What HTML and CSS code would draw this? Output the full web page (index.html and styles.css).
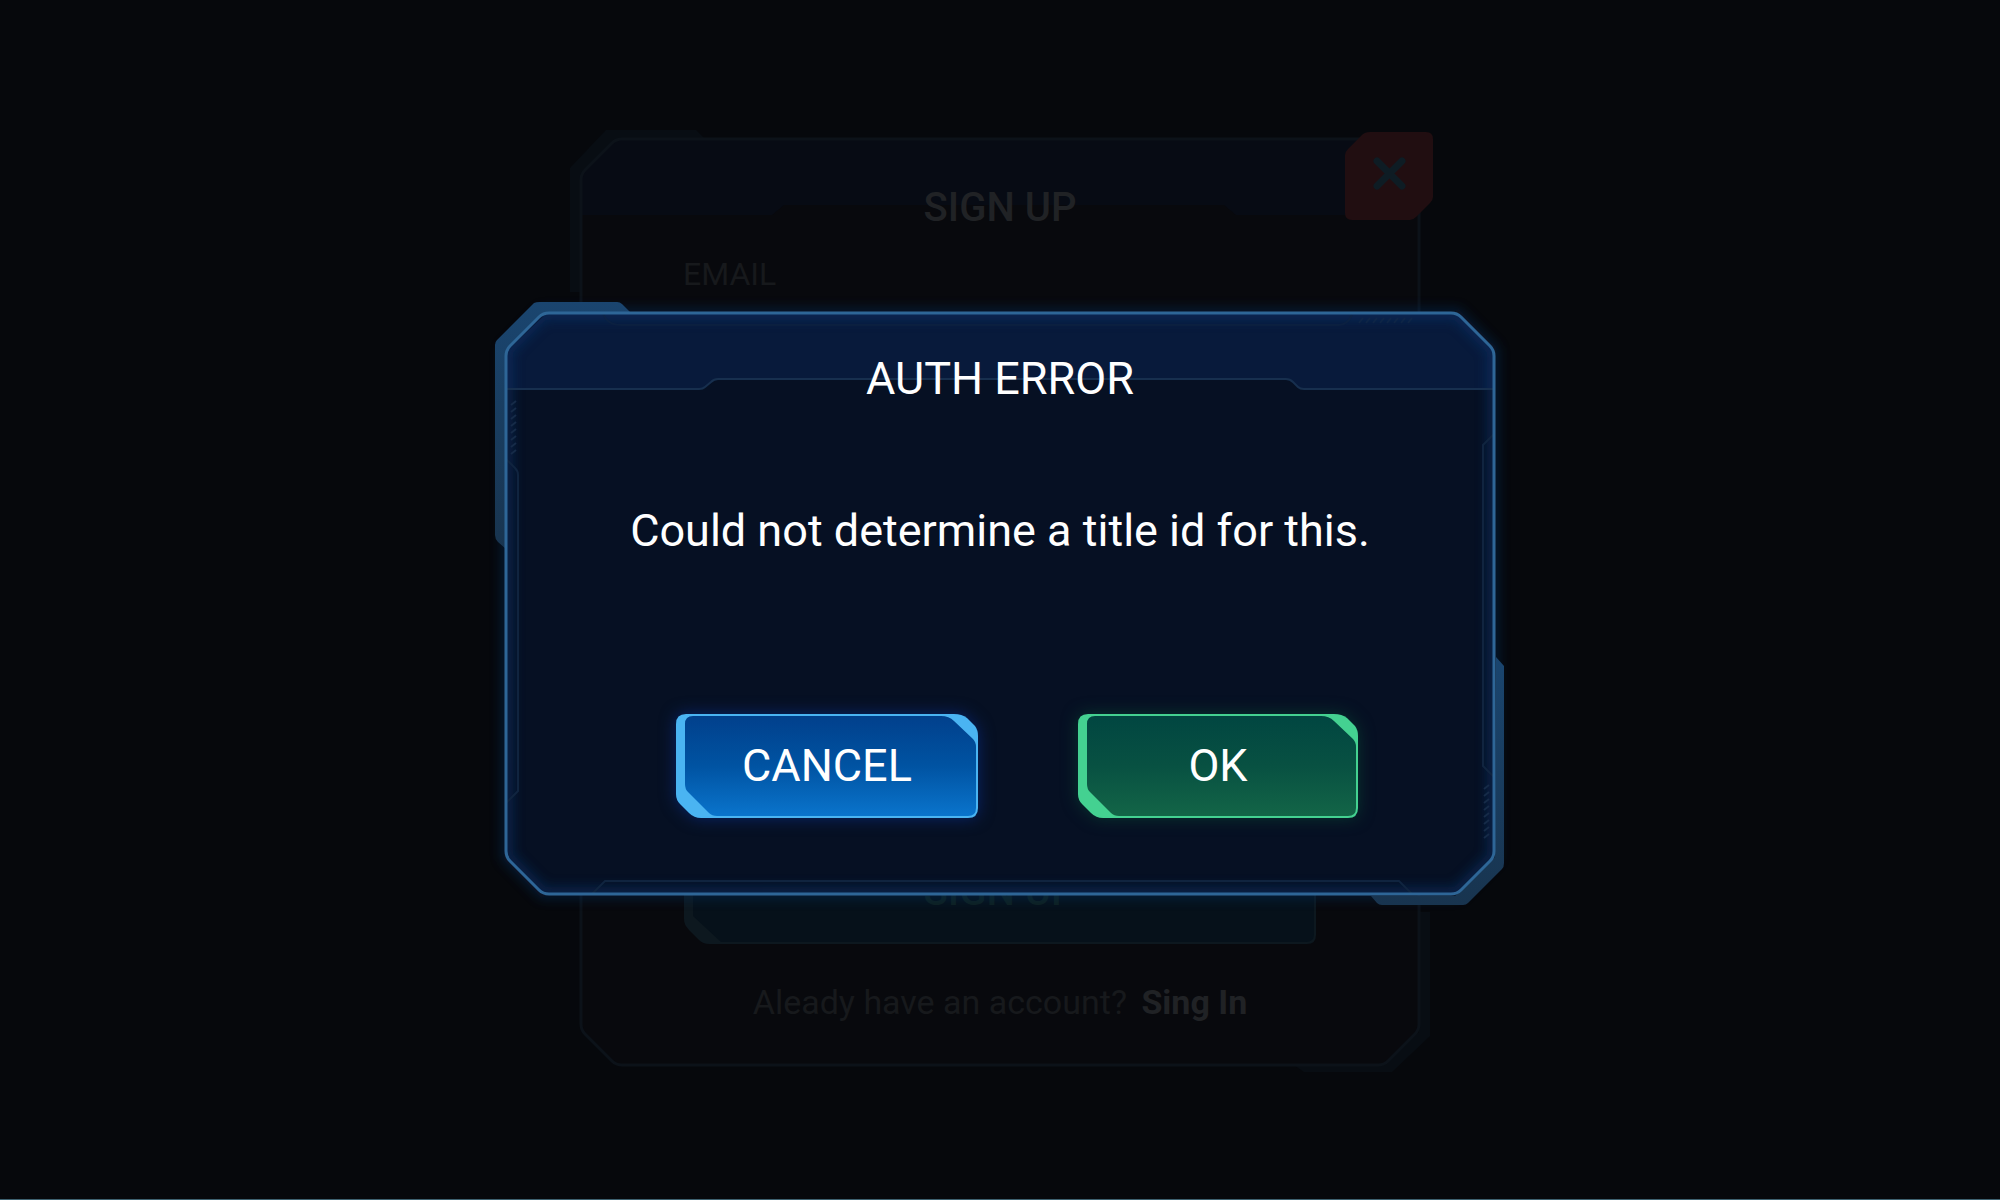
FILE: index.html
```html
<!DOCTYPE html>
<html lang="en">
<head>
  <meta charset="utf-8">
  <title>Auth error</title>
  <link rel="stylesheet" href="styles.css">
</head>
<body>
  <section class="signup">
    <svg class="frame" viewBox="0 0 864 950" preserveAspectRatio="none" aria-hidden="true">
      <path class="tab" d="M2 46 L38 8 H128 L138 18 H48 L13 54 V170 H2 Z"/>
      <path class="tab" d="M862 790 V914 L824 950 H736 L726 943 H816 L851 910 V790 Z"/>
      <path class="fill" d="M48 17 H816 L851 52 V908 L816 943 H48 L13 908 V52 Z"/>
      <path class="head" d="M48 18 H816 L850 52 V93 H668 L656 83 H216 L204 93 H14 V52 Z"/>
      <path class="line" d="M54 17 H810 Q816 17 820 21 L847 48 Q851 52 851 58 V902 Q851 908 847 912 L820 939 Q816 943 810 943 H54 Q48 943 44 939 L17 912 Q13 908 13 902 V58 Q13 52 17 48 L44 21 Q48 17 54 17 Z"/>
    </svg>
    <button class="close" type="button" aria-label="Close">
      <svg viewBox="0 0 90 90" aria-hidden="true">
        <path d="M26 1 H82 Q89 1 89 8 V66 Q89 69 86 72 L72 86 Q69 89 66 89 H8 Q1 89 1 82 V24 Q1 21 4 18 L17 5 Q20 1 26 1 Z" fill="#210e11"/>
        <path d="M33 30 L58 55 M58 30 L33 55" stroke="#0e1c24" stroke-width="7" stroke-linecap="round"/>
      </svg>
    </button>
    <h2>SIGN UP</h2>
    <label for="email">EMAIL</label>
    <input id="email" type="email">
    <button class="submit" type="button">
      <svg viewBox="0 0 634 106" preserveAspectRatio="none" aria-hidden="true">
        <path d="M10 1 H606 L633 26 V96 Q633 105 624 105 H26 Q20 105 16 101 L6 91 Q1 86 1 80 V10 Q1 1 10 1 Z" fill="#0d181f"/>
        <path d="M18 3 H604 L631 30 V95 Q631 103 623 103 H38 L10 77 V10 Q10 3 18 3 Z" fill="#06111a"/>
      </svg>
      <span>SIGN UP</span>
    </button>
    <p>Aleady have an account? <a href="#">Sing In</a></p>
  </section>

  <main class="dialog" role="alertdialog" aria-labelledby="title" aria-describedby="message">
    <svg class="frame" viewBox="0 0 1012 604" preserveAspectRatio="none" aria-hidden="true">
      <defs>
        <linearGradient id="tab" x2="0" y2="1">
          <stop offset="0" stop-color="#1a456f"/>
          <stop offset="1" stop-color="#18344f"/>
        </linearGradient>
        <filter id="glow" x="-5%" y="-5%" width="110%" height="110%">
          <feGaussianBlur stdDeviation="6"/>
        </filter>
        <clipPath id="inside">
          <path d="M53 12 H963 L1000 49 V556 L963 593 H49 L12 556 V51 Z"/>
        </clipPath>
      </defs>
      <path class="glow" d="M49 12 H963 L1000 49 V556 L963 593 H49 L12 556 V49 Z"/>
      <path fill="url(#tab)" d="M1 44 Q1 41 3 39 L40 2 Q42 1 46 1 H123 Q126 1 128 3 L136 11 H53 L12 50 V248 L4 241 Q1 238 1 234 Z"/>
      <path fill="url(#tab)" d="M1002 356 L1010 365 V562 Q1010 566 1008 568 L974 602 Q972 604 969 604 H888 Q885 604 883 602 L877 595 H961 L1001 556 Z"/>
      <path class="fill" d="M49 12 H963 L1000 49 V556 L963 593 H49 L12 556 V49 Z"/>
      <path class="head" d="M49 12 H963 L1000 49 V88 H810 Q806 88 804 86 L799 81 Q796 78 792 78 H224 Q220 78 217 81 L211 86 Q209 88 205 88 H12 V49 Z"/>
      <g clip-path="url(#inside)">
        <path class="glow inner" d="M49 12 H963 L1000 49 V556 L963 593 H49 L12 556 V49 Z"/>
      </g>
      <path class="seam" d="M12 88 H205 Q209 88 211 86 L217 81 Q220 78 224 78 H792 Q796 78 799 81 L804 86 Q806 88 810 88 H1000"/>
      <path class="trim" d="M12 158 L21 167 Q24 170 24 174 V490 L12 502 M1000 133 L989 144 V465 L1000 476 M98 593 L111 580 H905 L918 593"/>
      <path class="trim faint" d="M109 12 Q113 24 127 24 H845 Q853 24 858 14"/>
      <path class="hatch" d="M17 104 l5 -4 M17 111 l5 -4 M17 118 l5 -4 M17 125 l5 -4 M17 132 l5 -4 M17 139 l5 -4 M17 146 l5 -4 M17 153 l5 -4"/>
      <path class="hatch" d="M990 488 l5 -4 M990 495 l5 -4 M990 502 l5 -4 M990 509 l5 -4 M990 516 l5 -4 M990 523 l5 -4 M990 530 l5 -4 M990 537 l5 -4"/>
      <path class="hatch faint" d="M865 22 l4 -5 M872 22 l4 -5 M879 22 l4 -5 M886 22 l4 -5 M893 22 l4 -5 M900 22 l4 -5 M907 22 l4 -5 M914 22 l4 -5"/>
      <path class="line" d="M55 12 H957 Q963 12 967 16 L996 45 Q1000 49 1000 55 V550 Q1000 556 996 560 L967 589 Q963 593 957 593 H55 Q49 593 45 589 L16 560 Q12 556 12 550 V55 Q12 49 16 45 L45 16 Q49 12 55 12 Z"/>
    </svg>
    <h1 id="title">AUTH ERROR</h1>
    <p id="message">Could not determine a title id for this.</p>
    <div class="actions">
      <button class="cancel" type="button">
        <svg viewBox="0 0 304 106" preserveAspectRatio="none" aria-hidden="true">
          <defs>
            <linearGradient id="blue" x2="0" y2="1">
              <stop offset="0" stop-color="#01408c"/>
              <stop offset=".5" stop-color="#0053a2"/>
              <stop offset="1" stop-color="#0a74cc"/>
            </linearGradient>
          </defs>
          <path class="rim" d="M11 1 H279 Q287 1 292 5 L300 13 Q303 17 303 23 V95 Q303 105 293 105 H26 Q19 105 14 100 L5 91 Q1 87 1 81 V11 Q1 1 11 1 Z"/>
          <path fill="url(#blue)" d="M18 3 H266 Q274 3 279 8 L298 26 Q301 29 301 34 V95 Q301 103 293 103 H42 Q37 103 34 100 L13 79 Q10 76 10 71 V11 Q10 3 18 3 Z"/>
        </svg>
        <span>CANCEL</span>
      </button>
      <button class="ok" type="button">
        <svg viewBox="0 0 282 106" preserveAspectRatio="none" aria-hidden="true">
          <defs>
            <linearGradient id="green" x2="0" y2="1">
              <stop offset="0" stop-color="#014641"/>
              <stop offset=".5" stop-color="#085142"/>
              <stop offset="1" stop-color="#136547"/>
            </linearGradient>
          </defs>
          <path class="rim" d="M11 1 H257 Q265 1 270 5 L278 13 Q281 17 281 23 V95 Q281 105 271 105 H26 Q19 105 14 100 L5 91 Q1 87 1 81 V11 Q1 1 11 1 Z"/>
          <path fill="url(#green)" d="M18 3 H244 Q252 3 257 8 L276 26 Q279 29 279 34 V95 Q279 103 271 103 H42 Q37 103 34 100 L13 79 Q10 76 10 71 V11 Q10 3 18 3 Z"/>
        </svg>
        <span>OK</span>
      </button>
    </div>
  </main>
</body>
</html>
```
FILE: styles.css
```css
* {
    box-sizing: border-box;
}

body {
    margin: 0;
    min-height: 100vh;
    display: grid;
    place-items: center;
    background: #06080c;
    color: white;
    font-family: Roboto, "Liberation Sans", sans-serif;
    border-bottom: 1px solid #3d6170;
}

h1, h2, p {
    margin: 0;
    font-weight: 400;
}

button {
    position: relative;
    padding: 0;
    border: 0;
    background: none;
    color: inherit;
    font-family: inherit;
    cursor: pointer;
}

button svg {
    position: absolute;
    inset: 0;
    width: 100%;
    height: 100%;
}

button span {
    position: relative;
}

/* both panels share one cell, the dialog lies on top */
.signup, .dialog {
    grid-area: 1 / 1;
    position: relative;
    display: flex;
    flex-direction: column;
    max-width: 100%;
}

.frame {
    position: absolute;
    inset: 0;
    width: 100%;
    height: 100%;
    fill: none;
    overflow: visible;
}

.signup {
    width: 864px;
    min-height: 950px;
    margin-bottom: 6px;
    padding: 62px 115px 48px;
    color: #17191c;
}

.signup .tab {
    fill: #080d13;
}

.signup .fill {
    fill: #08090d;
}

.signup .head {
    fill: #070b14;
}

.signup .line {
    stroke: #0c1219;
    stroke-width: 3;
}

.signup h2 {
    position: relative;
    align-self: center;
    color: #202225;
    font-size: 40px;
    line-height: 48px;
    font-weight: 500;
}

.signup label {
    position: relative;
    margin-top: 22px;
    font-size: 32px;
    line-height: 40px;
}

.signup input {
    position: relative;
    height: 80px;
    margin-top: 20px;
    border: 1px solid #0d181f;
    background: #06111a;
    color: inherit;
}

.submit {
    height: 106px;
    margin-top: auto;
    color: #0e2020;
    font-size: 40px;
    font-weight: 500;
}

.signup p {
    position: relative;
    align-self: center;
    margin-top: 35px;
    font-size: 34px;
    line-height: 44px;
    white-space: nowrap;
}

.signup a {
    margin-left: 6px;
    color: #202225;
    font-weight: 700;
    text-decoration: none;
}

.close {
    position: absolute;
    top: 9px;
    right: -2px;
    width: 90px;
    height: 90px;
}

.dialog {
    width: 1012px;
    min-height: 604px;
    margin-top: 6px;
    padding: 50px 40px 86px;
    align-items: center;
}

.dialog .fill {
    fill: #061023;
}

.dialog .head {
    fill: #081a3b;
}

.dialog .line {
    stroke: #2e6697;
    stroke-width: 3;
}

.glow {
    stroke: #0b356e;
    stroke-width: 8;
    filter: url(#glow);
    opacity: .5;
}

.glow.inner {
    stroke-width: 14;
}

.seam {
    stroke: #172f4e;
    stroke-width: 2;
}

.trim {
    stroke: #10243f;
    stroke-width: 2;
}

.hatch {
    stroke: #162b48;
    stroke-width: 2;
}

.faint {
    opacity: .5;
}

.dialog h1, .dialog p, .actions {
    position: relative;
}

.dialog h1, .dialog p, .actions button {
    font-size: 45px;
    line-height: 56px;
}

.dialog p {
    margin-top: 96px;
}

.actions {
    display: flex;
    gap: 98px;
    margin-top: auto;
    padding-left: 34px;
}

.actions button {
    height: 106px;
}

.cancel {
    width: 304px;
}

.ok {
    width: 282px;
}

.cancel svg {
    filter: drop-shadow(0 0 8px #08246a);
}

.ok svg {
    filter: drop-shadow(0 0 8px #07352f);
}

.cancel .rim {
    fill: #4ab4f2;
}

.ok .rim {
    fill: #44d191;
}
```
